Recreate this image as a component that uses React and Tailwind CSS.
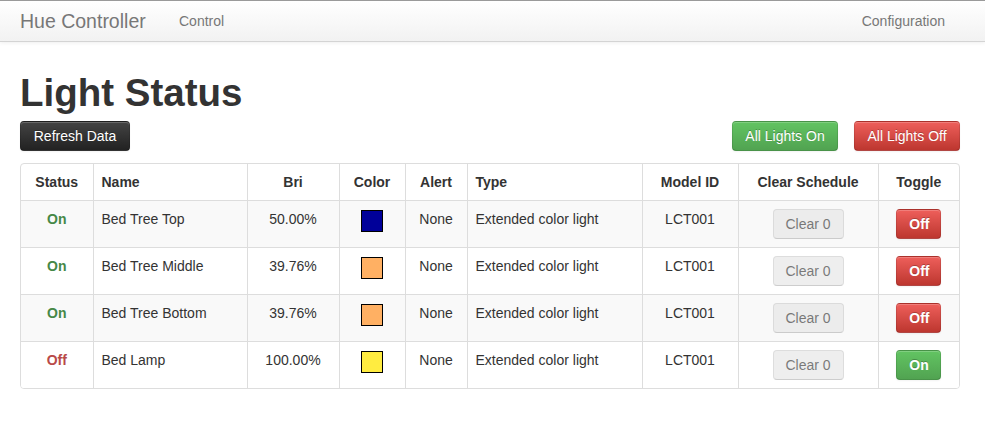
import React from "react";

const lights = [
  { on: true, name: "Bed Tree Top", bri: "50.00%", color: "bg-[#000099]" },
  { on: true, name: "Bed Tree Middle", bri: "39.76%", color: "bg-[#ffb063]" },
  { on: true, name: "Bed Tree Bottom", bri: "39.76%", color: "bg-[#ffb063]" },
  { on: false, name: "Bed Lamp", bri: "100.00%", color: "bg-[#ffec40]" },
];

const btn =
  "inline-block px-[12px] py-[4px] text-[14px] leading-[20px] rounded-[4px] border text-white [text-shadow:0_-1px_0_rgba(0,0,0,0.25)] border-[rgba(0,0,0,0.1)] border-b-[rgba(0,0,0,0.25)] shadow-[inset_0_1px_0_rgba(255,255,255,0.2),0_1px_2px_rgba(0,0,0,0.05)]";
const green = "bg-linear-to-b from-[#62c462] to-[#51a351]";
const red = "bg-linear-to-b from-[#ee5f5b] to-[#bd362f]";
const dark = "bg-linear-to-b from-[#444444] to-[#222222]";

const th = "px-[8px] py-[8px] leading-[20px] font-bold border-l border-[#dddddd] align-top";
const td = "px-[8px] py-[8px] leading-[20px] border-l border-t border-[#dddddd] align-top";

export default function App() {
  return (
    <div className="min-h-[436px] bg-white text-[14px] text-[#333333] font-['Liberation_Sans',Arial,sans-serif]">
      {/* navbar */}
      <div className="h-[42px] border-t border-t-[#9a9a9a] border-b border-b-[#d4d4d4] bg-linear-to-b from-white to-[#f2f2f2] shadow-[0_1px_4px_rgba(0,0,0,0.065)] flex items-center pl-[20px] pr-[40px]">
        <span className="w-[144px] text-[19.5px] text-[#777777] leading-[20px]">Hue Controller</span>
        <span className="px-[15px] text-[#777777] leading-[20px]">Control</span>
        <span className="ml-auto text-[#777777] leading-[20px]">Configuration</span>
      </div>

      <div className="px-[20px] pr-[25px]">
        <h1 className="mt-[31px] text-[38.5px] leading-[40px] font-bold text-[#333333]">Light Status</h1>

        <div className="mt-[8px] flex items-center">
          <button className={`${btn} ${dark} w-[110px] px-0`}>Refresh Data</button>
          <div className="ml-auto flex gap-[16px]">
            <button className={`${btn} ${green} w-[106px] px-0`}>All Lights On</button>
            <button className={`${btn} ${red} w-[106px] px-0`}>All Lights Off</button>
          </div>
        </div>

        <div className="mt-[12px] w-[940px] border border-[#dddddd] rounded-[4px] overflow-hidden">
          <table className="w-full table-fixed border-collapse">
            <colgroup>
              <col className="w-[72px]" />
              <col className="w-[154px]" />
              <col className="w-[92px]" />
              <col className="w-[66px]" />
              <col className="w-[62px]" />
              <col className="w-[175px]" />
              <col className="w-[96px]" />
              <col className="w-[140px]" />
              <col className="w-[81px]" />
            </colgroup>
            <thead>
              <tr>
                <th className={`${th} text-center border-l-0`}>Status</th>
                <th className={`${th} text-left`}>Name</th>
                <th className={`${th} text-center`}>Bri</th>
                <th className={`${th} text-center`}>Color</th>
                <th className={`${th} text-center`}>Alert</th>
                <th className={`${th} text-left`}>Type</th>
                <th className={`${th} text-center`}>Model ID</th>
                <th className={`${th} text-center`}>Clear Schedule</th>
                <th className={`${th} text-center`}>Toggle</th>
              </tr>
            </thead>
            <tbody>
              {lights.map((l, i) => (
                <tr key={l.name} className={i % 2 === 0 ? "bg-[#f9f9f9]" : "bg-white"}>
                  <td className={`${td} border-l-0 text-center font-bold ${l.on ? "text-[#468847]" : "text-[#b94a48]"}`}>
                    {l.on ? "On" : "Off"}
                  </td>
                  <td className={td}>{l.name}</td>
                  <td className={`${td} text-center`}>{l.bri}</td>
                  <td className={`${td} text-center`}>
                    <div className={`mx-auto mt-[1px] w-[22px] h-[22px] border border-black ${l.color}`} />
                  </td>
                  <td className={`${td} text-center`}>None</td>
                  <td className={td}>Extended color light</td>
                  <td className={`${td} text-center`}>LCT001</td>
                  <td className={`${td} text-center`}>
                    <button
                      disabled
                      className="w-[71px] py-[4px] text-[14px] leading-[20px] rounded-[4px] border border-[#cccccc] border-b-[#b3b3b3] bg-[#e6e6e6] text-[#333333] opacity-65 cursor-default"
                    >
                      Clear 0
                    </button>
                  </td>
                  <td className={`${td} text-center`}>
                    <button className={`${btn} ${l.on ? red : green} w-[45px] px-0 font-bold`}>
                      {l.on ? "Off" : "On"}
                    </button>
                  </td>
                </tr>
              ))}
            </tbody>
          </table>
        </div>
      </div>
    </div>
  );
}
